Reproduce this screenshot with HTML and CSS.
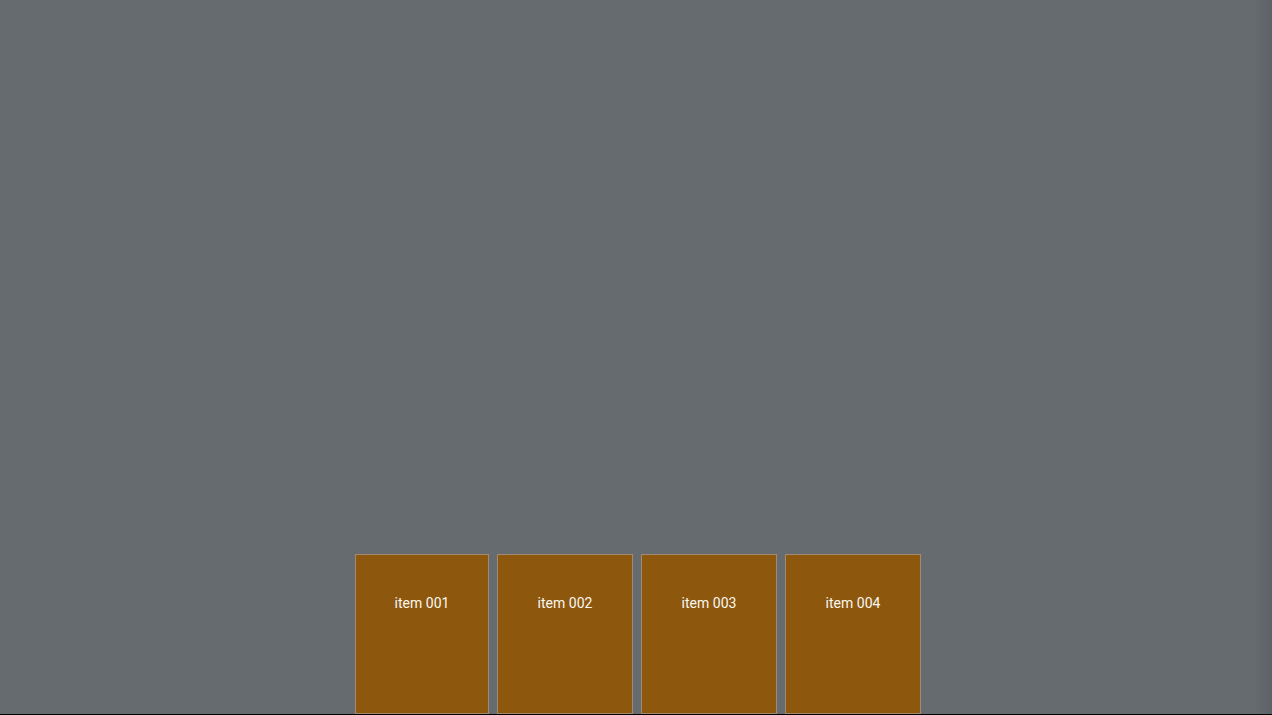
FILE: index.html
```html
<!DOCTYPE html>
<html lang="en">
<head>
<meta charset="utf-8">
<title>Items</title>
<link rel="stylesheet" href="styles.css">
</head>
<body>
<main class="stage">
  <div class="shelf">
    <div class="item item-first">item 001</div>
    <div class="item">item 002</div>
    <div class="item">item 003</div>
    <div class="item">item 004</div>
  </div>
  <div class="baseline"></div>
</main>
</body>
</html>
```

FILE: styles.css
```css
html, body {
  margin: 0;
  padding: 0;
  height: 100%;
  overflow: hidden;
}
body {
  font-family: Roboto, "Liberation Sans", sans-serif;
  background: linear-gradient(to right, #656b6f calc(100% - 18px), #5c6265 100%);
}
.stage {
  height: 100%;
  display: flex;
  flex-direction: column;
  justify-content: flex-end;
}
.shelf {
  display: flex;
  justify-content: center;
  gap: 8px;
  padding-left: 4px;
}
.item {
  box-sizing: border-box;
  width: 136px;
  height: 160px;
  background: #8d570d;
  border: 1px solid #a28a6c;
  color: #fbf8f2;
  font-size: 14px;
  line-height: 20px;
  text-align: center;
  padding-top: 38px;
}
.item-first {
  width: 134px;
}
.baseline {
  height: 1px;
  background: #000;
}
```
